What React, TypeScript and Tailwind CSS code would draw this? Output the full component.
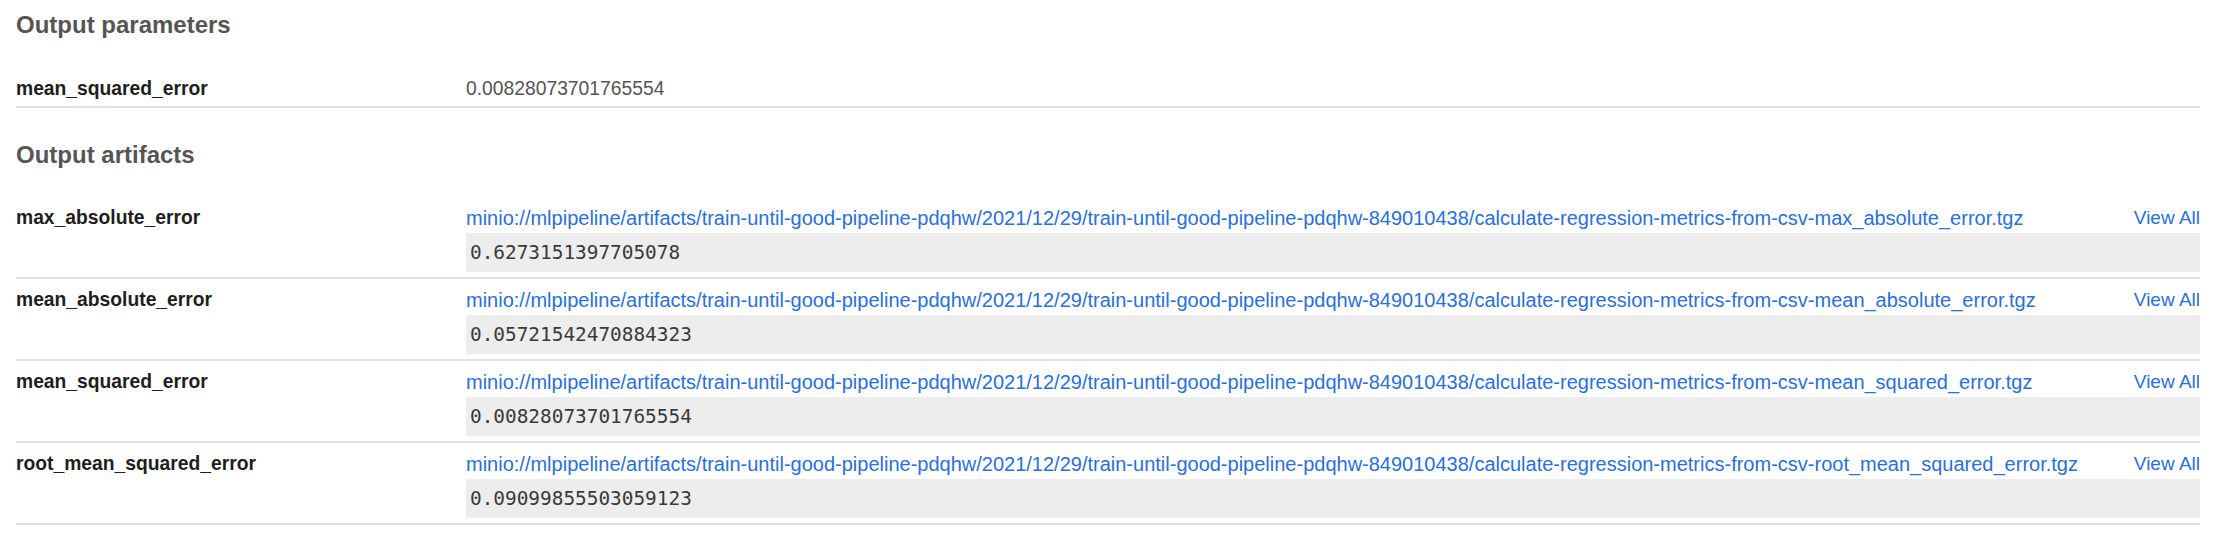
import React from "react";

const base =
  "minio://mlpipeline/artifacts/train-until-good-pipeline-pdqhw/2021/12/29/train-until-good-pipeline-pdqhw-849010438/calculate-regression-metrics-from-csv-";

const artifacts = [
  { name: "max_absolute_error", value: "0.6273151397705078" },
  { name: "mean_absolute_error", value: "0.05721542470884323" },
  { name: "mean_squared_error", value: "0.00828073701765554" },
  { name: "root_mean_squared_error", value: "0.09099855503059123" },
  { name: "metrics", value: "" },
];

export default function App() {
  return (
    <div
      className="min-h-screen bg-white pl-[16px] pr-[18px]"
      style={{ fontFamily: '"Liberation Sans", Arial, Helvetica, sans-serif' }}
    >
      <h2 className="pt-[9px] text-[24px] leading-[32px] font-bold text-[#555555]">
        Output parameters
      </h2>
      <div className="mt-[26px] flex border-b-2 border-[#e0e0e0] pt-[7px] pb-[3px]">
        <div className="w-[450px] shrink-0 text-[19.3px] leading-[29px] font-bold text-[#1e1e1e]">
          mean_squared_error
        </div>
        <div className="text-[19.3px] leading-[29px] text-[#555555]">0.00828073701765554</div>
      </div>

      <h2 className="mt-[31px] text-[24px] leading-[32px] font-bold text-[#555555]">
        Output artifacts
      </h2>
      <div className="mt-[26px]">
        {artifacts.map((a) => (
          <div key={a.name} className="flex border-b-2 border-[#e0e0e0] pt-[7px] pb-[5px]">
            <div className="w-[450px] shrink-0 text-[19.3px] leading-[28px] font-bold text-[#1e1e1e]">
              {a.name}
            </div>
            <div className="flex min-w-0 flex-1 flex-col">
              <div className="flex items-start justify-between leading-[28px] text-[#2a6fdb]">
                <span className="whitespace-nowrap text-[20px]">
                  {base}
                  {a.name}.tgz
                </span>
                <span className="whitespace-nowrap text-[19px]">View All</span>
              </div>
              <div
                className="mt-[1px] flex h-[39px] items-center bg-[#ededed] px-[4px] text-[19.4px] text-[#3a3a3a]"
                style={{ fontFamily: '"DejaVu Sans Mono", monospace' }}
              >
                {a.value}
              </div>
            </div>
          </div>
        ))}
      </div>
    </div>
  );
}
